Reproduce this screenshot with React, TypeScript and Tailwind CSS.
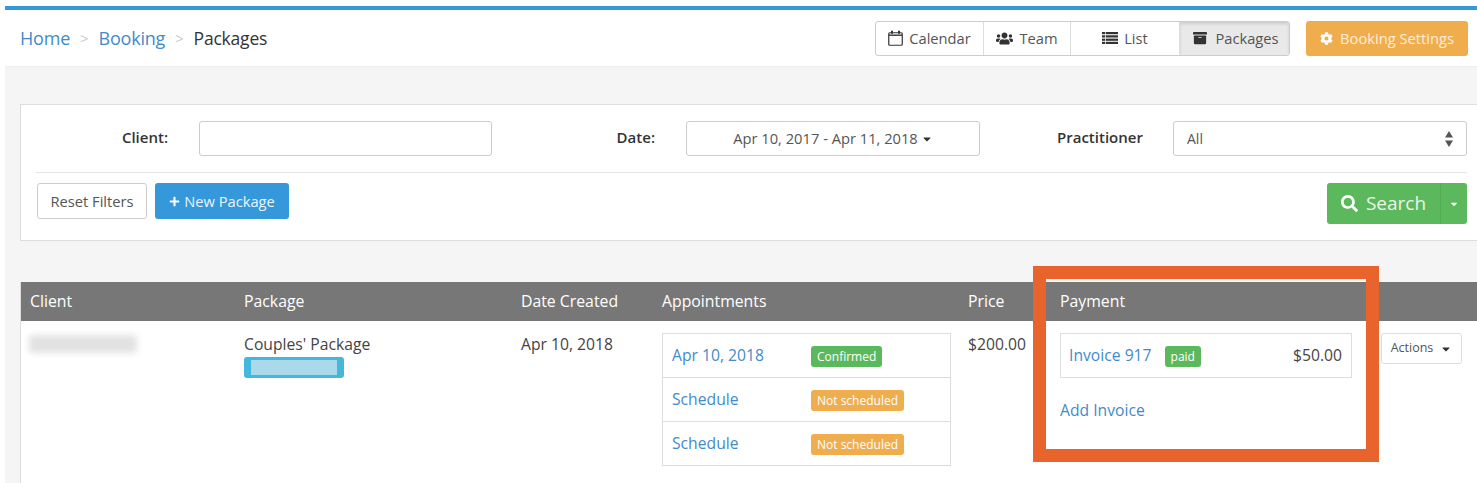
import React from "react";
import { FaUsers, FaArchive, FaCog, FaPlus, FaSearch, FaCaretDown } from "react-icons/fa";

const Badge = ({ children, color, className }: { children: React.ReactNode; color: string; className?: string }) => (
  <span className={`inline-flex h-[21px] items-center rounded-[3px] px-[6px] text-[12px] text-white ${color} ${className ?? ""}`}>
    {children}
  </span>
);

const CalendarIcon = () => (
  <svg width="15" height="16" viewBox="0 0 15 16" fill="none" stroke="#333">
    <rect x="0.75" y="2.75" width="13.5" height="12.5" rx="1" strokeWidth="1.2" />
    <path d="M1 5.2h13" strokeWidth="1.4" />
    <path d="M4 0.8v3M11 0.8v3" strokeWidth="2" />
  </svg>
);

const ListIcon = () => (
  <svg width="16" height="12" viewBox="0 0 16 12" fill="#333">
    <rect x="0" y="0" width="16" height="2.2" />
    <rect x="0" y="3.3" width="16" height="2.2" />
    <rect x="0" y="6.6" width="16" height="2.2" />
    <rect x="0" y="9.8" width="16" height="2.2" />
    <rect x="3" y="0" width="0.7" height="12" fill="#fff" />
  </svg>
);

const SelectArrows = () => (
  <svg width="8" height="16" viewBox="0 0 8 16" fill="#555">
    <path d="M4 0l4 6.5H0zM4 16l4-6.5H0z" />
  </svg>
);

const appointments = [
  { label: "Apr 10, 2018", status: "Confirmed", color: "bg-[#5cb85c]" },
  { label: "Schedule", status: "Not scheduled", color: "bg-[#f0ad4e]" },
  { label: "Schedule", status: "Not scheduled", color: "bg-[#f0ad4e]" },
];

const App = () => {
  return (
    <div className="relative h-[483px] w-[1477px] overflow-hidden bg-white pl-[5px] pt-[6px] font-['Open_Sans',sans-serif] text-[#444]">
      <div className="h-[4px] bg-[#3498db]" />

      <div className="flex h-[57px] items-center border-b border-[#eee] pl-[15px] pr-[9px]">
        <div className="flex items-center text-[18px] tracking-[-0.2px]">
          <span className="text-[#428bca]">Home</span>
          <span className="mx-[10px] text-[15px] text-[#ccc]">&gt;</span>
          <span className="text-[#428bca]">Booking</span>
          <span className="mx-[10px] text-[15px] text-[#ccc]">&gt;</span>
          <span className="text-[17.5px] font-medium text-[#333]">Packages</span>
        </div>

        <div className="ml-auto flex h-[35px] rounded-[3px] border border-[#ccc] text-[14.7px] text-[#555]">
          <div className="flex w-[108px] items-center justify-center gap-[6px] border-r border-[#ddd]">
            <CalendarIcon />Calendar
          </div>
          <div className="flex w-[87px] items-center justify-center gap-[6px] border-r border-[#ddd]">
            <FaUsers className="text-[17px] text-[#333]" />Team
          </div>
          <div className="flex w-[109px] items-center justify-center gap-[6px] border-r border-[#ddd]">
            <ListIcon />List
          </div>
          <div className="flex w-[109px] items-center justify-center gap-[8px] rounded-r-[3px] bg-[#e9e9e9] pl-[3px] shadow-[inset_0_2px_3px_rgba(0,0,0,0.12)]">
            <FaArchive className="text-[14px] text-[#333]" />Packages
          </div>
        </div>

        <div className="ml-[16px] flex h-[35px] w-[162px] items-center justify-center gap-[7px] rounded-[3px] bg-[#f0ad4e] text-[14.7px] text-[#fdeed8]">
          <FaCog className="text-[13px] text-white" />Booking Settings
        </div>
      </div>

      <div className="h-[416px] bg-[#f5f5f5] pl-[15px] pt-[37px]">
        <div className="h-[137px] w-[1480px] border border-[#ddd] bg-white pl-[15px] pt-[16px]">
          <div className="flex h-[35px] w-[1431px] items-center text-[14.7px]">
            <label className="w-[132px] pb-[2px] text-right text-[15px] font-semibold text-[#333]">Client:</label>
            <div className="ml-[31px] h-full w-[293px] rounded-[3px] border border-[#ccc] bg-white" />
            <label className="w-[163px] pb-[2px] text-right text-[15px] font-semibold text-[#333]">Date:</label>
            <div className="ml-[31px] flex h-full w-[294px] items-center justify-center gap-[3px] rounded-[3px] border border-[#ccc] text-[#555]">
              Apr 10, 2017 - Apr 11, 2018 <FaCaretDown className="text-[12px] text-[#333]" />
            </div>
            <label className="ml-[77px] w-[85px] whitespace-nowrap pb-[2px] text-[15px] font-semibold text-[#333]">Practitioner</label>
            <div className="ml-[31px] flex h-full w-[294px] items-center justify-between rounded-[3px] border border-[#ccc] pl-[13px] pr-[13px] text-[14px] text-[#555]">
              All <SelectArrows />
            </div>
          </div>

          <div className="mt-[16px] h-px w-[1431px] bg-[#e5e5e5]" />

          <div className="mt-[10px] flex w-[1431px] items-start text-[14.7px]">
            <div className="ml-px flex h-[36px] w-[110px] items-center justify-center rounded-[3px] border border-[#ccc] text-[#555]">
              Reset Filters
            </div>
            <div className="ml-[8px] flex h-[36px] w-[134px] items-center justify-center gap-[4px] rounded-[3px] bg-[#3498db] text-[#eaf5fc]">
              <FaPlus className="text-[11px] text-white" />New Package
            </div>
            <div className="ml-auto flex h-[41px] w-[140px] rounded-[3px] bg-[#5cb85c] text-[19px] text-[#eaf6ea]">
              <div className="flex w-[114px] items-center justify-center gap-[8px] border-r border-[#4cae4c]">
                <FaSearch className="text-[17px] text-white" />Search
              </div>
              <div className="flex flex-1 items-center justify-center">
                <FaCaretDown className="text-[10px] text-white" />
              </div>
            </div>
          </div>
        </div>

        <div className="mt-[41px] w-[1460px] border-l border-[#ddd] bg-white">
          <div className="grid h-[39px] grid-cols-[214px_277px_141px_306px_92px_1fr] items-center bg-[#777] pl-[9px] text-[15.8px] font-medium text-white">
            <div>Client</div>
            <div>Package</div>
            <div>Date Created</div>
            <div>Appointments</div>
            <div>Price</div>
            <div>Payment</div>
          </div>

          <div className="grid h-[170px] grid-cols-[214px_277px_141px_306px_92px_321px_1fr] items-start pl-[9px] text-[15.7px]">
            <div className="mt-[14px]">
              <div className="-ml-[1px] h-[18px] w-[108px] rounded-[4px] bg-[#e2e2e2] blur-[3px]" />
            </div>
            <div className="mt-[12px]">
              <div className="leading-[22px]">Couples' Package</div>
              <div className="mt-[2px] h-[21px] w-[100px] rounded-[3px] bg-[#42b8dd] p-[3px_7px]">
                <div className="h-full w-full bg-[#abd9ea]" />
              </div>
            </div>
            <div className="mt-[12px] leading-[22px]">Apr 10, 2018</div>
            <div className="mt-[12px] w-[289px] border border-[#ddd]">
              {appointments.map((a, i) => (
                <div key={i} className={`flex items-center pl-[9px] ${i > 0 ? "h-[44px] border-t border-[#ddd]" : "h-[43px]"}`}>
                  <a className="w-[139px] text-[#428bca]">{a.label}</a>
                  <Badge color={a.color} className="mt-[2px]">{a.status}</Badge>
                </div>
              ))}
            </div>
            <div className="mt-[12px] leading-[22px]">$200.00</div>
            <div>
              <div className="mt-[12px] flex h-[45px] w-[292px] items-center border border-[#ddd] pl-[8px] pr-[9px]">
                <a className="text-[#428bca]">Invoice 917</a>
                <Badge color="bg-[#5cb85c]" className="ml-[13px] mt-[2px]">paid</Badge>
                <span className="ml-auto">$50.00</span>
              </div>
              <a className="mt-[21px] block leading-[22px] text-[#428bca]">Add Invoice</a>
            </div>
            <div className="mt-[12px] flex h-[31px] w-[81px] items-center justify-center gap-[7px] rounded-[3px] border border-[#ddd] text-[12.5px] text-[#555]">
              Actions <FaCaretDown className="text-[12px] text-[#333]" />
            </div>
          </div>
        </div>
      </div>

      {/* annotation on top of the screenshot */}
      <div className="absolute left-[1033px] top-[266px] h-[196px] w-[346px] border-[13px] border-[#e8642c]" />
    </div>
  );
};

export default App;
